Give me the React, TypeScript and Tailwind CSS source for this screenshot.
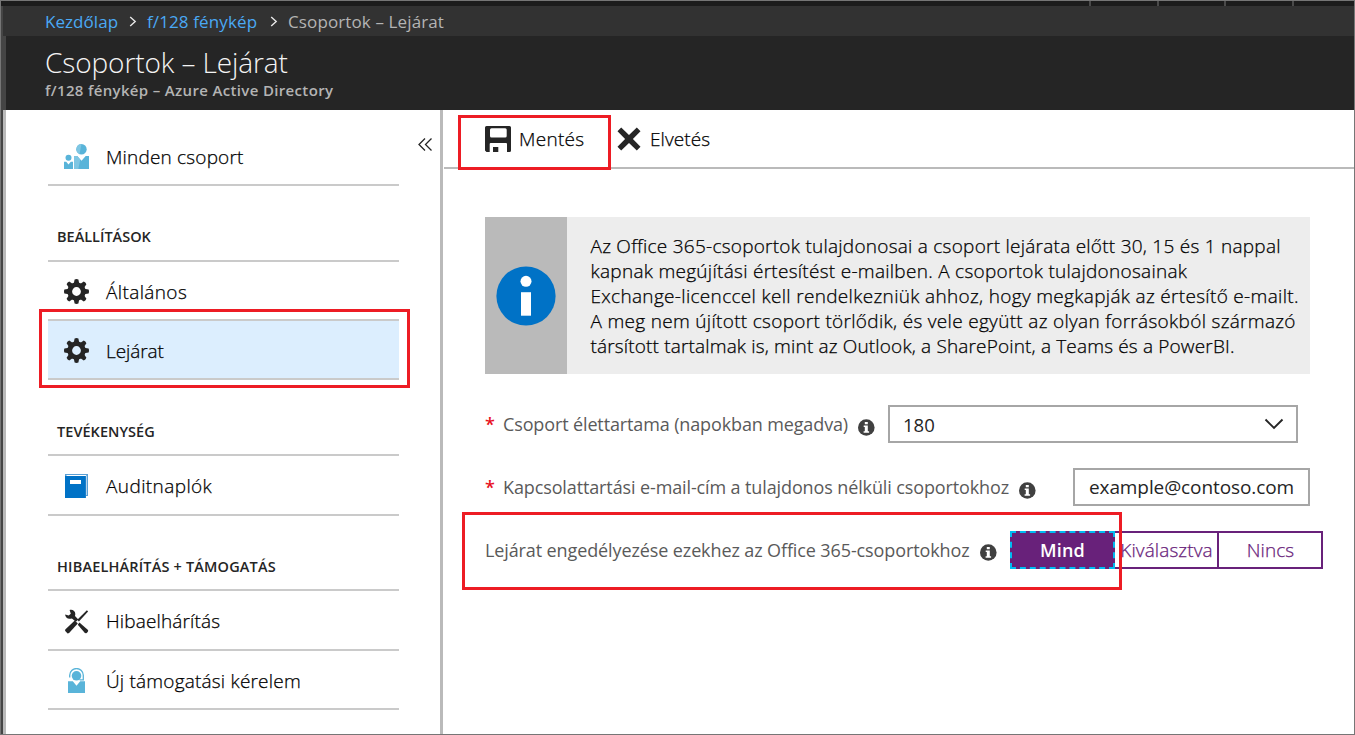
import type { ReactNode } from "react";

function PeopleIcon() {
  return (
    <svg width="25" height="25" viewBox="0 0 25 25">
      <circle cx="17.5" cy="5.2" r="5.2" fill="#59b4d9" />
      <path d="M17.5 0A5.2 5.2 0 0 0 15.6 10z" fill="#7ec6e3" />
      <path d="M10 12h3.2l4.3 4.8 4.2-4.8H25v13H10z" fill="#59b4d9" />
      <path d="M10 12h3.2l3 3.4L14.4 25H10z" fill="#7ec6e3" />
      <circle cx="4.5" cy="13.8" r="3" fill="#59b4d9" />
      <path d="M0 17.8h2.2l2.3 2.6 2.3-2.6H9V25H0z" fill="#59b4d9" />
    </svg>
  );
}

const TEETH_VERTICAL = "M10.6 0.4Q12.5 -0.4 14.4 0.4L15.3 5H9.7zM10.6 24.6Q12.5 25.4 14.4 24.6L15.3 20H9.7z";
const TEETH_HORIZONTAL = "M0.4 10.6Q-0.4 12.5 0.4 14.4L5 15.3V9.7zM24.6 10.6Q25.4 12.5 24.6 14.4L20 15.3V9.7z";

function GearIcon() {
  return (
    <svg width="25" height="25" viewBox="0 0 25 25">
      <g fill="#252525">
        <path d={TEETH_VERTICAL} />
        <path d={TEETH_HORIZONTAL} />
        <g transform="rotate(45 12.5 12.5)">
          <path d={TEETH_VERTICAL} />
          <path d={TEETH_HORIZONTAL} />
        </g>
      </g>
      <circle cx="12.5" cy="12.5" r="6.8" fill="none" stroke="#252525" strokeWidth="4.8" />
    </svg>
  );
}

function BookIcon() {
  return (
    <svg width="25" height="25" viewBox="0 0 25 25">
      <path d="M1 0h23v22h-2v2H1z" fill="#5a9fd4" />
      <path d="M2.5 1H22v1H2.5z" fill="#fff" />
      <path d="M22 1.5h.8V21H22z" fill="#cfe3f3" />
      <path d="M1 2h20.7v22H1z" fill="#0072c6" />
      <path d="M6 6h11v4H6z" fill="#fff" />
    </svg>
  );
}

function ToolsIcon() {
  return (
    <svg width="25" height="25" viewBox="0 0 25 25">
      <path d="M22.9 1.2l1.2 1.2-9.2 10-1.6-1.6z" fill="#252525" />
      <path d="M10.8 11.6l3 3L5.1 24 3.6 24.5 1 21.8l.5-1.5z" fill="#252525" />
      <path
        d="M5.6.9c3-1 5.9 1.3 5.7 4.3l-.3 1.7 3.3 3.6-2.4 2.3-4-3.4C5 10.6 1.2 8.9 1.2 5.400l3.500 1.100 2.100-1.800z"
        fill="#252525"
      />
      <path d="M15.4 13.4L24 20.9c.8 1.4-1.5 3.9-3.1 3.1l-7.1-8.3z" fill="#252525" />
    </svg>
  );
}

function SupportIcon() {
  return (
    <svg width="25" height="25" viewBox="0 0 25 25">
      <path d="M5.7 9.6V7.3a6.8 6.8 0 0 1 13.6 0v4.5h-3.6" fill="none" stroke="#59b4d9" strokeWidth="1.3" />
      <circle cx="12.5" cy="7.8" r="4.8" fill="#59b4d9" />
      <path d="M4 13.3h4.8l3.7 4.5 3.7-4.5H21V25H4z" fill="#59b4d9" />
    </svg>
  );
}

function SaveIcon() {
  return (
    <svg width="26" height="26" viewBox="0 0 26 26">
      <path
        fillRule="evenodd"
        fill="#252525"
        d="M1.5 0h23Q26 0 26 1.5v23q0 1.500-1.500 1.500H22V18q0-1-1-1H5.700q-1 0-1 1v8H1.500L0 24.500v-23Q0 0 1.500 0zM6.500 2.300q-1.500 0-1.500 1.500V10q0 1.500 1.500 1.500h13.700q1.500 0 1.500-1.500V3.800q0-1.500-1.500-1.500z"
      />
      <path d="M8 21h5.300v5H8z" fill="#252525" />
    </svg>
  );
}

function CloseIcon() {
  return (
    <svg width="24" height="24" viewBox="0 0 24 24">
      <path
        d="M4.2.5L12 8.1 19.8.5 23.5 4.2 15.9 12l7.600 7.800-3.700 3.700L12 15.900l-7.800 7.600L.5 19.800 8.100 12 .5 4.200z"
        fill="#252525"
      />
    </svg>
  );
}

function InfoDot() {
  return (
    <svg width="17" height="17" viewBox="0 0 17 17" className="shrink-0">
      <circle cx="8.3" cy="8.5" r="8.3" fill="#404040" />
      <path d="M6.800 3h3v2.300h-3zM5.700 6.500h4.100v5.700h1.300v1.600H5.600v-1.600h1.200V8H5.700z" fill="#fff" />
    </svg>
  );
}

function Chevron() {
  return (
    <svg width="8" height="11" viewBox="0 0 8 11">
      <path d="M1.200 1l5 4.500-5 4.500" fill="none" stroke="#e8e8e8" strokeWidth="1.400" />
    </svg>
  );
}

function NavItem({ icon, className, children }: { icon: ReactNode; className: string; children: ReactNode }) {
  return (
    <div className={`flex items-center gap-[17px] border-b-2 border-[#cacaca] pl-4 pt-[2px] ${className}`}>
      {icon}
      <span className="whitespace-nowrap text-[19px] font-light leading-6 [-webkit-text-stroke:0.25px]">{children}</span>
    </div>
  );
}

function NavHeading({ className, children }: { className: string; children: ReactNode }) {
  return (
    <div
      className={`flex items-center whitespace-nowrap border-b-2 border-[#cacaca] pl-[9px] text-[14.5px] font-semibold text-[#252525] ${className}`}
    >
      {children}
    </div>
  );
}

export default function App() {
  return (
    <div className="relative flex h-[735px] w-[1355px] flex-col overflow-hidden border border-[#767676] bg-white font-['Open_Sans',sans-serif] text-black">
      <div className="flex h-[5px] shrink-0 justify-end bg-[#1c1c1c]">
        <div className="w-[68px] border-l-2 border-[#4a4a4a]" />
        <div className="w-[67px] border-l-2 border-[#4a4a4a]" />
        <div className="w-[68px] border-l-2 border-[#4a4a4a]" />
        <div className="w-[62px] border-l-2 border-[#4a4a4a]" />
      </div>

      <div className="flex min-h-0 flex-1">
        <div className="w-[2px] shrink-0 bg-[#454545]" />
        <div className="flex min-w-0 flex-1 flex-col">
          <nav className="flex h-[30px] shrink-0 items-center bg-[#323232] pl-[42px] pt-px text-[17px] leading-[30px] text-[#b4b4b4]">
            <span className="w-[84px] tracking-[0.05px] text-[#4aa9f5]">Kezdőlap</span>
            <span className="w-[18px]"><Chevron /></span>
            <span className="w-[123px] whitespace-nowrap tracking-[0.12px] text-[#4aa9f5]">f/128 fénykép</span>
            <span className="w-[18px]"><Chevron /></span>
            <span className="whitespace-nowrap tracking-[0.12px]">Csoportok – Lejárat</span>
          </nav>

          <header className="flex h-[74px] shrink-0 flex-col border-l-[3px] border-[#454545] bg-[#252525] pl-[39px] pt-[8px]">
            <h1 className="text-[28px] font-light leading-9 tracking-[-0.1px] text-[#f4f4f4]">Csoportok – Lejárat</h1>
            <p className="text-[15px] font-semibold leading-5 tracking-[0.34px] text-[#b4b4b4]">
              f/128 fénykép – Azure Active Directory
            </p>
          </header>

          <div className="flex min-h-0 flex-1 border-l-[3px] border-[#bababa]">
            <aside className="flex w-[437px] shrink-0 justify-between border-r-[3px] border-[#bababa] pl-[42px] pr-[7px] pt-[17px]">
              <div className="w-[351px] shrink-0">
                <NavItem icon={<PeopleIcon />} className="h-[59px] tracking-[0.18px]">Minden csoport</NavItem>
                <NavHeading className="h-[76px] pt-[27px]">BEÁLLÍTÁSOK</NavHeading>
                <NavItem icon={<GearIcon />} className="h-[59px] tracking-[0.38px]">Általános</NavItem>
                <NavItem icon={<GearIcon />} className="h-[59px] bg-[#dceefe] tracking-[-0.1px]">Lejárat</NavItem>
                <NavHeading className="h-[76px] pt-[29px] tracking-[0.05px]">TEVÉKENYSÉG</NavHeading>
                <NavItem icon={<BookIcon />} className="h-[60px] tracking-[0.4px]">Auditnaplók</NavItem>
                <NavHeading className="h-[75px] pt-[28px] tracking-[0.17px]">HIBAELHÁRÍTÁS + TÁMOGATÁS</NavHeading>
                <NavItem icon={<ToolsIcon />} className="h-[60px] tracking-[0.15px]">Hibaelhárítás</NavItem>
                <NavItem icon={<SupportIcon />} className="h-[59px] tracking-[0.2px]">Új támogatási kérelem</NavItem>
              </div>
              <svg width="16" height="16" viewBox="0 0 16 16" className="mt-[10px] shrink-0">
                <path d="M8 1.500L2 7.500l6 6M14.500 1.500l-6 6 6 6" fill="none" stroke="#252525" strokeWidth="1.300" />
              </svg>
            </aside>

            <main className="flex min-w-0 flex-1 flex-col pl-px">
              <div className="flex h-[59px] shrink-0 items-center border-b-2 border-[#bababa] pl-[41px] text-[19px] font-light leading-6 [-webkit-text-stroke:0.25px]">
                <SaveIcon />
                <span className="ml-[8px] w-[98px] pt-px tracking-[0.28px]">Mentés</span>
                <CloseIcon />
                <span className="ml-[9px] pt-px tracking-[0.1px]">Elvetés</span>
              </div>

              <div className="flex flex-col pl-[41px] pt-[48px]">
                <section className="flex h-[157px] w-[825px]">
                  <div className="flex w-[82px] shrink-0 items-center justify-center bg-[#bababa]">
                    <svg width="60" height="60" viewBox="0 0 60 60">
                      <circle cx="30" cy="30" r="29.600" fill="#0072c6" />
                      <circle cx="30" cy="15.300" r="5.500" fill="#fff" />
                      <path d="M25 26.200h10v23.500H25z" fill="#fff" />
                    </svg>
                  </div>
                  <div className="flex-1 whitespace-nowrap bg-[#ededed] pl-[23.5px] pt-[17px] text-[19px] font-light leading-[25px] [-webkit-text-stroke:0.25px]">
                    <p className="tracking-[0.25px]">
                      Az Office 365-csoportok tulajdonosai a csoport lejárata előtt 30, 15 és 1 nappal
                    </p>
                    <p className="tracking-[0.28px]">
                      kapnak megújítási értesítést e-mailben. A csoportok tulajdonosainak
                    </p>
                    <p className="tracking-[0.32px]">
                      Exchange-licenccel kell rendelkezniük ahhoz, hogy megkapják az értesítő e-mailt.
                    </p>
                    <p className="tracking-[0.31px]">
                      A meg nem újított csoport törlődik, és vele együtt az olyan forrásokból származó
                    </p>
                    <p className="tracking-[0.16px]">
                      társított tartalmak is, mint az Outlook, a SharePoint, a Teams és a PowerBI.
                    </p>
                  </div>
                </section>

                <div className="mt-[31px] flex h-[38px] items-center whitespace-nowrap text-[18px] text-[#5a5a5a]">
                  <span className="w-[18px] font-semibold text-[#e81123]">*</span>
                  <label className="w-[355px] pt-px tracking-[-0.13px]">Csoport élettartama (napokban megadva)</label>
                  <span className="w-[30px] pt-[7px]"><InfoDot /></span>
                  <div className="flex h-[38px] w-[410px] items-center justify-between border-2 border-[#a6a6a6] pl-[13px] pr-[12px] text-[18.5px] text-[#252525]">
                    <span className="pt-px">180</span>
                    <svg width="20" height="12" viewBox="0 0 20 12">
                      <path d="M1.500 1.500L10 10l8.500-8.500" fill="none" stroke="#252525" strokeWidth="1.900" />
                    </svg>
                  </div>
                </div>

                <div className="mt-[25px] flex h-[38px] items-center whitespace-nowrap text-[18px] text-[#5a5a5a]">
                  <span className="w-[18px] font-semibold text-[#e81123]">*</span>
                  <label className="w-[516px] pt-px tracking-[-0.12px]">
                    Kapcsolattartási e-mail-cím a tulajdonos nélküli csoportokhoz
                  </label>
                  <span className="w-[54px] pt-[7px]"><InfoDot /></span>
                  <div className="flex h-[38px] w-[237px] items-center border-2 border-[#a6a6a6] pl-[14px] text-[19px] tracking-[-0.1px] text-[#252525]">
                    example@contoso.com
                  </div>
                </div>

                <div className="mt-[25px] flex h-[38px] items-center whitespace-nowrap text-[18px] text-[#5a5a5a]">
                  <label className="w-[495px] tracking-[-0.11px]">
                    Lejárat engedélyezése ezekhez az Office 365-csoportokhoz
                  </label>
                  <span className="w-[30px] pt-[5px]"><InfoDot /></span>
                  <div className="flex h-[38px] w-[313px] text-[19px] text-[#68217a]">
                    <div className="flex w-[105px] items-center justify-center border-2 border-dashed border-[#00bcf2] bg-[#68217a] pt-px text-[18px] font-semibold tracking-[0.15px] text-white">
                      Mind
                    </div>
                    <div className="flex w-[104px] items-center justify-center border-y-2 border-r-2 border-[#68217a] pl-px pt-px font-light tracking-[0.1px] [-webkit-text-stroke:0.25px]">
                      Kiválasztva
                    </div>
                    <div className="flex w-[104px] items-center justify-center border-y-2 border-r-2 border-[#68217a] pl-px pt-px font-light tracking-[0.1px] [-webkit-text-stroke:0.25px]">
                      Nincs
                    </div>
                  </div>
                </div>
              </div>
            </main>
          </div>
        </div>
      </div>

      <div className="pointer-events-none absolute left-[457px] top-[114px] h-[55px] w-[153px] border-[3px] border-[#ed1c24]" />
      <div className="pointer-events-none absolute left-[38px] top-[308px] h-[79px] w-[371px] border-[3px] border-[#ed1c24]" />
      <div className="pointer-events-none absolute left-[461px] top-[511px] h-[78px] w-[660px] border-[3px] border-[#ed1c24]" />
    </div>
  );
}
